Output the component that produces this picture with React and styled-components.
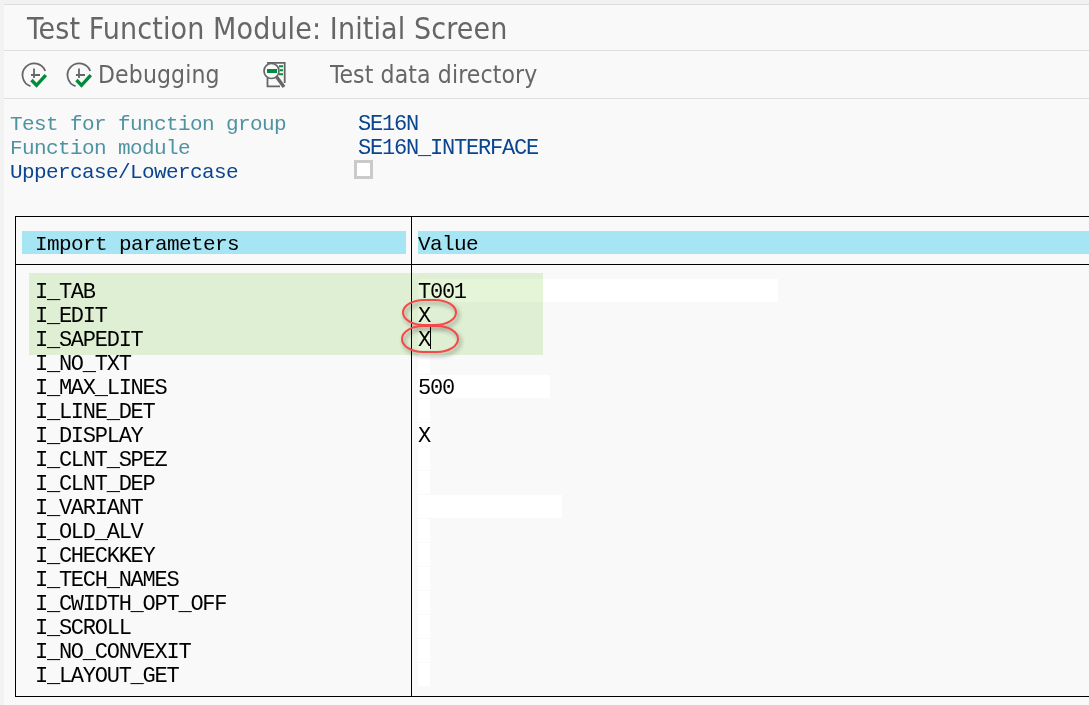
import React from "react";
import styled, { createGlobalStyle } from "styled-components";

const Global = createGlobalStyle`
  * { box-sizing: border-box; }
  body { margin: 0; background: #f2f2f2; overflow: hidden; }
`;

const Window = styled.div`
  width: 1089px;
  height: 705px;
  padding: 4px 0 0 4px;
  background: #f2f2f2;
  overflow: hidden;
`;

const Screen = styled.main`
  height: 701px;
  background: #f9f9f9;
  border-top: 1px solid #dedede;
  display: flex;
  flex-direction: column;
`;

const TitleBar = styled.header`
  height: 46px;
  padding-left: 23px;
  border-bottom: 1px solid #dedede;
  display: flex;
  align-items: center;
`;

const Title = styled.h1`
  margin: 0;
  padding-top: 2px;
  font: 400 30px/44px "DejaVu Sans Condensed", "DejaVu Sans", sans-serif;
  font-stretch: condensed;
  letter-spacing: 0.12px;
  color: #666;
  white-space: nowrap;
`;

const Toolbar = styled.nav`
  height: 48px;
  padding-left: 16px;
  border-bottom: 1px solid #dedede;
  display: flex;
  align-items: center;
`;

const ToolButton = styled.button`
  display: flex;
  flex: none;
  align-items: center;
  gap: 5px;
  width: ${(p) => p.$width}px;
  height: 46px;
  padding: 0;
  border: 0;
  background: none;
  color: #666;
  font: 400 24.5px/48px "DejaVu Sans Condensed", "DejaVu Sans", sans-serif;
  font-stretch: condensed;
  letter-spacing: 0.12px;
  white-space: nowrap;
`;

const Mono = styled.div`
  font-family: "Liberation Mono", monospace;
  font-size: 21px;
  letter-spacing: -0.6px;
  line-height: 27px;
  white-space: pre;
`;

const Form = styled(Mono)`
  padding: 13px 0 0 6px;
  height: 117px;
  line-height: 26px;
`;

const FormRow = styled.div`
  display: flex;
  height: 24px;
  color: ${(p) => p.$color};
`;

const FormLabel = styled.span`
  width: 348px;
`;

const FormValue = styled.span`
  color: #0b4590;
  font-size: 22px;
  letter-spacing: -1.2px;
`;

const CheckBox = styled.span`
  width: 19px;
  height: 19px;
  margin: 0 0 0 -4px;
  border: 3px solid #cacaca;
  background: #fff;
`;

const Table = styled(Mono)`
  position: relative;
  margin-left: 11px;
  height: 481px;
  border: 1px solid #000;
  border-right: 0;
  display: grid;
  grid-template-columns: 396px 1fr;
  grid-template-rows: 48px 1fr;
  color: #000;
  line-height: 28px;
`;

const HeadCell = styled.div`
  padding: 14px ${(p) => (p.$first ? 5 : 0)}px 0 6px;
  border-right: ${(p) => (p.$first ? "1px solid #000" : "0")};
  border-bottom: 1px solid #000;
`;

const HeadBand = styled.div`
  height: 23px;
  padding-left: ${(p) => p.$indent || 0}px;
  background: #a6e6f4;
`;

const NameColumn = styled.div`
  padding: 14px 0 0 19px;
  border-right: 1px solid #000;
  font-size: 22px;
  letter-spacing: -1.25px;
`;

const ValueColumn = styled.div`
  padding: 14px 0 0 6px;
  font-size: 22px;
  letter-spacing: -1.25px;
`;

const Name = styled.div`
  height: 24px;
`;

const Field = styled.div`
  width: ${(p) => p.$width}px;
  height: 23px;
  margin-bottom: 1px;
  background: #fff;
`;

const Caret = styled.span`
  display: inline-block;
  width: 1px;
  height: 22px;
  vertical-align: top;
  background: #000;
`;

const Highlight = styled.div`
  position: absolute;
  left: 13px;
  top: 56px;
  width: 514px;
  height: 82px;
  background: #e5f5d8;
  mix-blend-mode: multiply;
`;

const Marks = styled.svg`
  position: absolute;
  left: 376px;
  top: 73px;
  filter: drop-shadow(2px 3px 2px rgba(0, 0, 0, 0.4));
`;

const ExecuteIcon = () => (
  <svg width="28" height="28" viewBox="0 0 28 28" fill="none">
    <path d="M10.5 25.2A11.7 11.7 0 1 1 25.2 10" stroke="#666" strokeWidth="1.8" />
    <path d="M11 14H20M14 7.5V17" stroke="#666" strokeWidth="1.8" />
    <path d="M11.5 19L16.5 24.3L25.8 14.2" stroke="#008c3c" strokeWidth="3.4" />
  </svg>
);

const FindIcon = () => (
  <svg width="26" height="28" viewBox="0 0 26 28" fill="none">
    <path d="M4 1.8H21.7V22M4.5 17V25.3H17" stroke="#666" strokeWidth="1.8" />
    <path d="M16 5.3H20M17 9.3H20M16 13.3H20" stroke="#008c3c" strokeWidth="2" />
    <circle cx="8.5" cy="10" r="7.5" fill="#f9f9f9" stroke="#666" strokeWidth="1.7" />
    <rect x="4" y="8" width="10" height="4" fill="#008c3c" />
    <path d="M13.5 15.8L21 26" stroke="#666" strokeWidth="3.4" />
  </svg>
);

const parameters = [
  ["I_TAB", "T001", 360],
  ["I_EDIT", "X", 12],
  ["I_SAPEDIT", "X", 12, true],
  ["I_NO_TXT", "", 12],
  ["I_MAX_LINES", "500", 132],
  ["I_LINE_DET", "", 12],
  ["I_DISPLAY", "X", 12],
  ["I_CLNT_SPEZ", "", 12],
  ["I_CLNT_DEP", "", 12],
  ["I_VARIANT", "", 144],
  ["I_OLD_ALV", "", 12],
  ["I_CHECKKEY", "", 12],
  ["I_TECH_NAMES", "", 12],
  ["I_CWIDTH_OPT_OFF", "", 12],
  ["I_SCROLL", "", 12],
  ["I_NO_CONVEXIT", "", 12],
  ["I_LAYOUT_GET", "", 12],
];

export default function App() {
  return (
    <Window>
      <Global />
      <Screen>
        <TitleBar>
          <Title>Test Function Module: Initial Screen</Title>
        </TitleBar>
        <Toolbar>
          <ToolButton $width={45} aria-label="Execute"><ExecuteIcon /></ToolButton>
          <ToolButton $width={198}><ExecuteIcon />Debugging</ToolButton>
          <ToolButton $width={67} aria-label="Find"><FindIcon /></ToolButton>
          <ToolButton>Test data directory</ToolButton>
        </Toolbar>
        <Form>
          <FormRow $color="#4f93a3">
            <FormLabel>Test for function group</FormLabel>
            <FormValue>SE16N</FormValue>
          </FormRow>
          <FormRow $color="#4f93a3">
            <FormLabel>Function module</FormLabel>
            <FormValue>SE16N_INTERFACE</FormValue>
          </FormRow>
          <FormRow $color="#0b4590">
            <FormLabel>Uppercase/Lowercase</FormLabel>
            <CheckBox />
          </FormRow>
        </Form>
        <Table>
          <HeadCell $first><HeadBand $indent={13}>Import parameters</HeadBand></HeadCell>
          <HeadCell><HeadBand>Value</HeadBand></HeadCell>
          <NameColumn>
            {parameters.map(([name]) => <Name key={name}>{name}</Name>)}
          </NameColumn>
          <ValueColumn>
            {parameters.map(([name, value, width, caret]) => (
              <Field key={name} $width={width}>{value}{caret && <Caret />}</Field>
            ))}
          </ValueColumn>
          <Highlight />
          <Marks width="80" height="70" viewBox="392 290 80 70" fill="none" stroke="#f64848" strokeWidth="2">
            <rect x="403" y="300" width="53" height="25" rx="21" ry="12.5" />
            <rect x="402" y="326" width="56" height="26" rx="21" ry="13" />
          </Marks>
        </Table>
      </Screen>
    </Window>
  );
}
